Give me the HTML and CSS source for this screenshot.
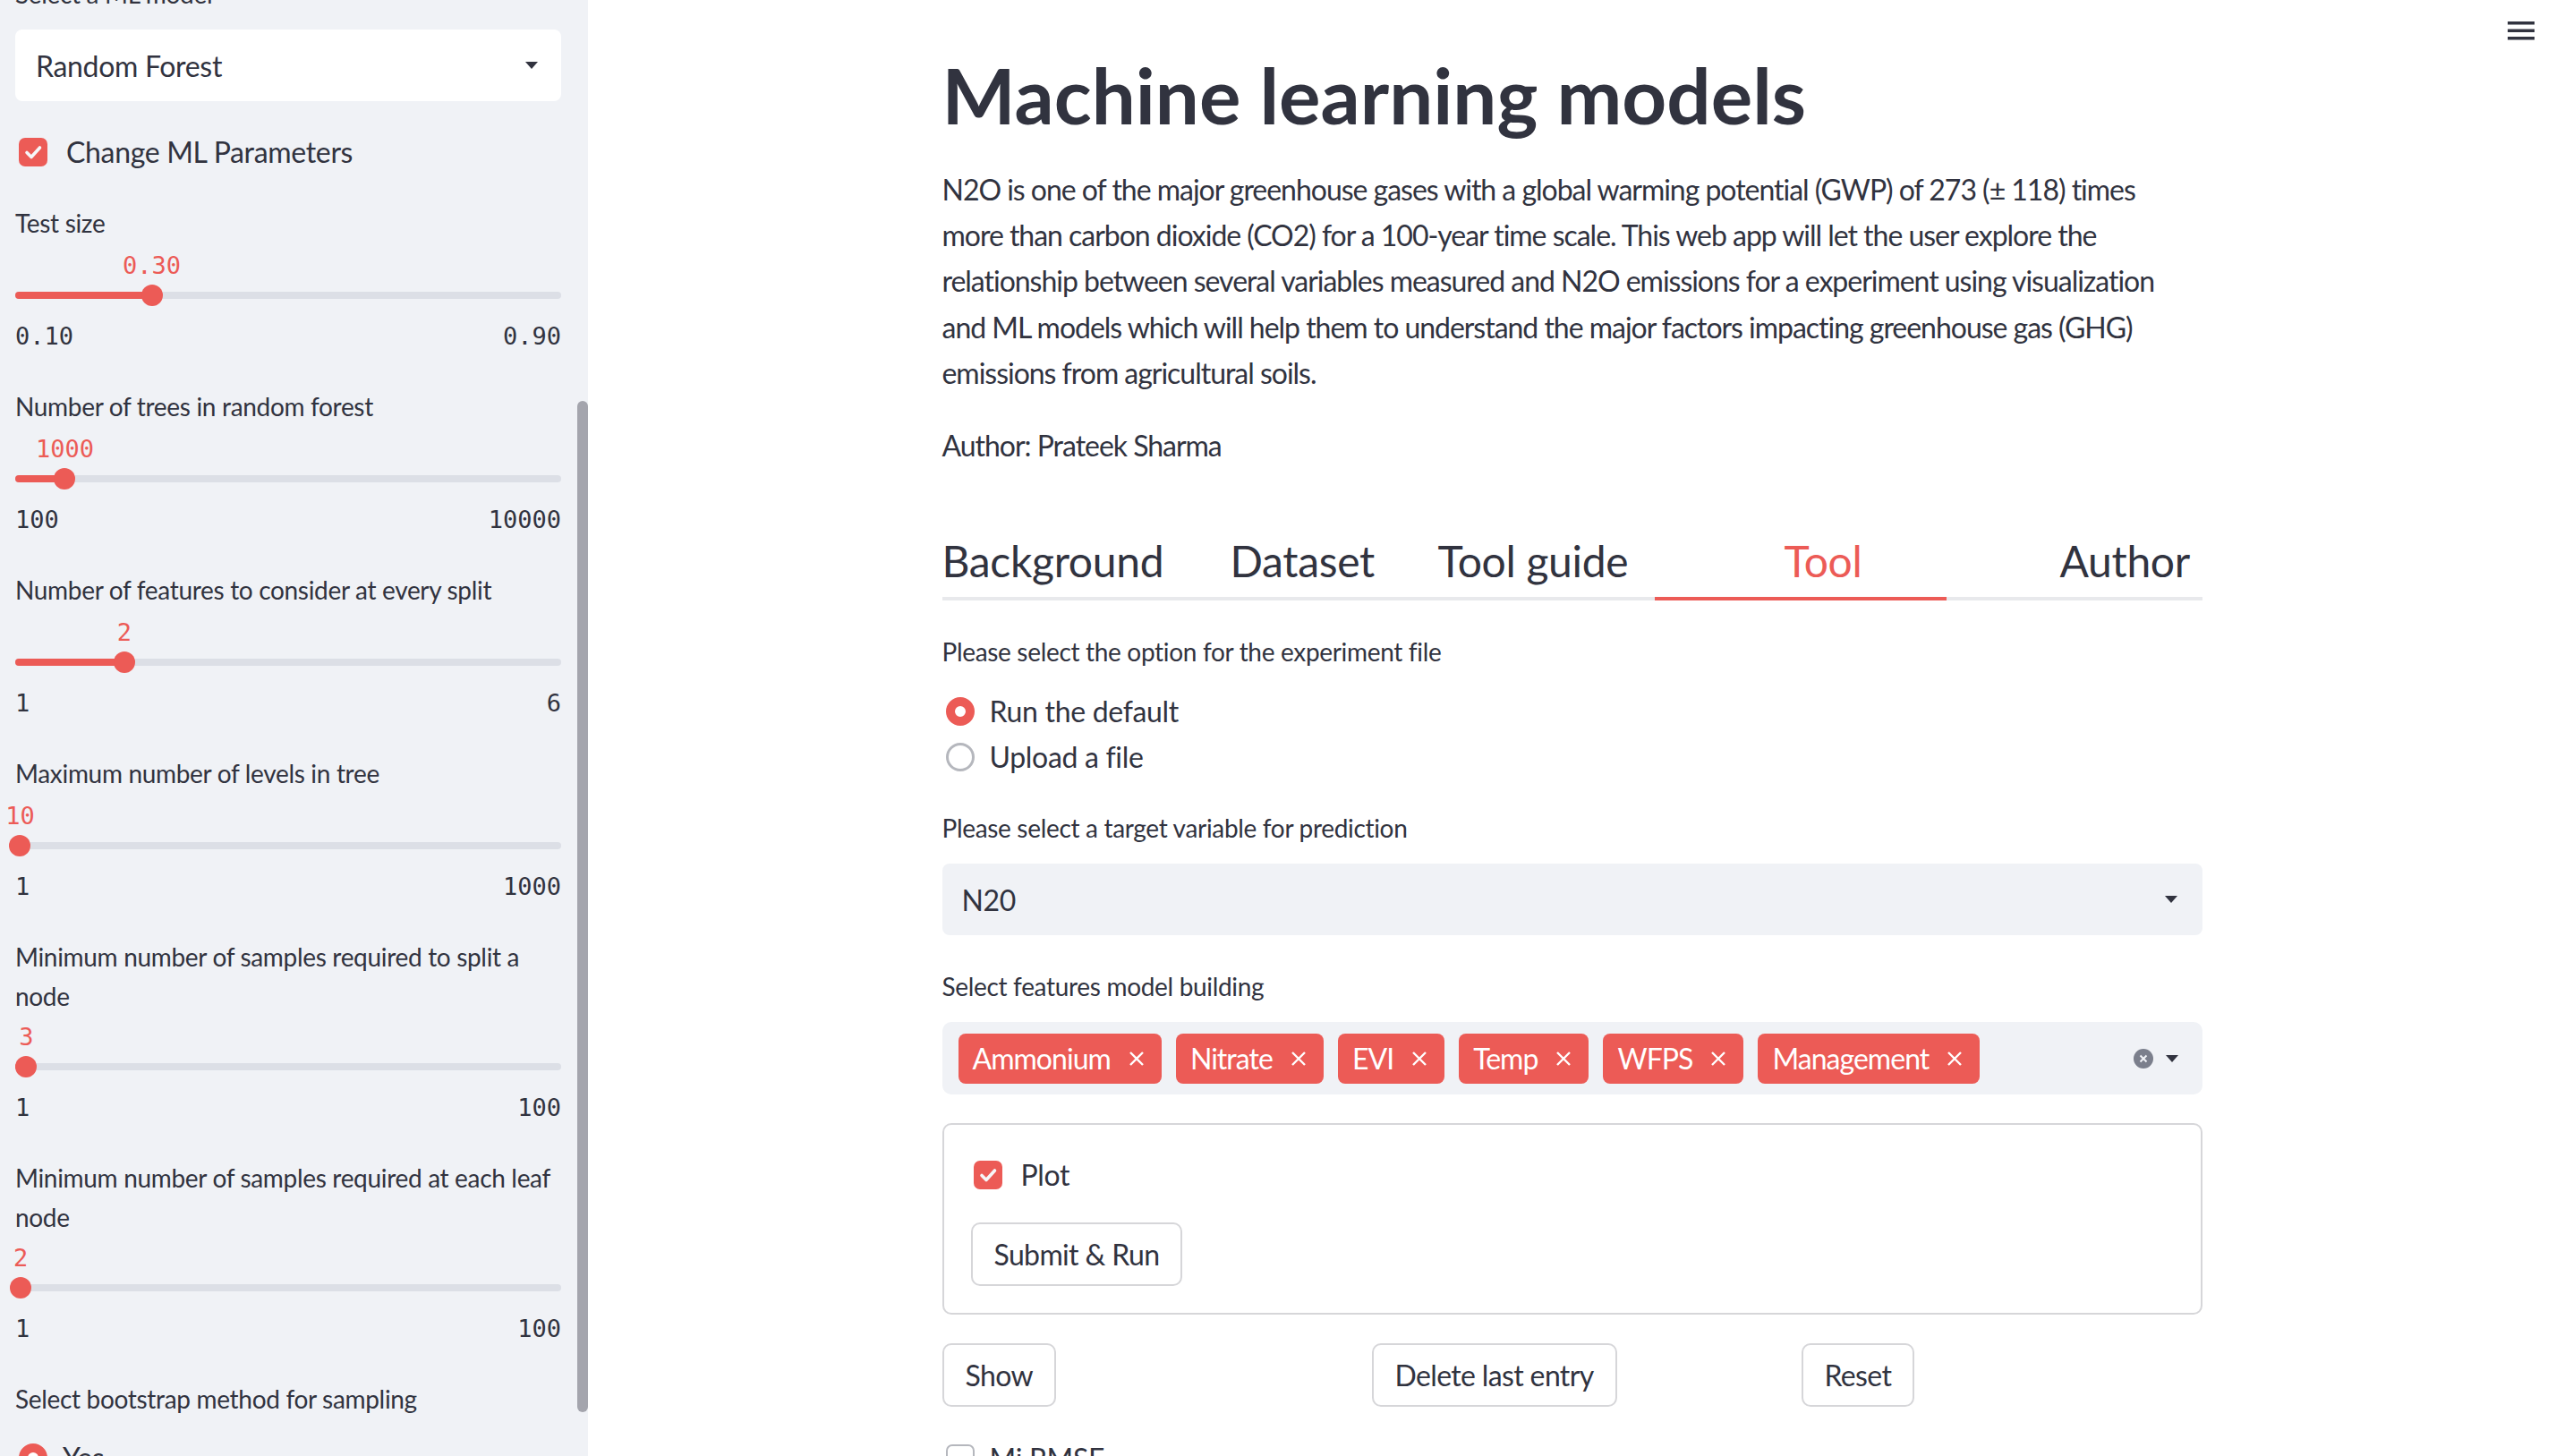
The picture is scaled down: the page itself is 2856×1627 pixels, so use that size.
FILE: index.html
```html
<!DOCTYPE html>
<html lang="en">
<head>
<meta charset="utf-8">
<title>Machine learning models</title>
<link rel="stylesheet" href="styles.css">
</head>
<body>
<div class="app">
  <aside class="sidebar">
    <div class="sb-content">
      <div class="wlabel">Select a ML model</div>
      <div class="select select-white">
        <span>Random Forest</span>
        <svg class="caret" viewBox="0 0 14 8"><polygon points="0,0 14,0 7,8"/></svg>
      </div>
      <div class="check-row sb-check">
        <span class="checkbox"><svg viewBox="0 0 32 32"><polyline points="9,16.5 14,21.5 23.5,11"/></svg></span>
        <span>Change ML Parameters</span>
      </div>

      <div class="slider-block first">
        <div class="wlabel">Test size</div>
        <div class="track">
          <div class="fill" style="width:25%"></div>
          <div class="thumb" style="left:25%"></div>
          <div class="thumb-value" style="left:25%">0.30</div>
        </div>
        <div class="minmax"><span>0.10</span><span>0.90</span></div>
      </div>

      <div class="slider-block">
        <div class="wlabel">Number of trees in random forest</div>
        <div class="track">
          <div class="fill" style="width:9.09%"></div>
          <div class="thumb" style="left:9.09%"></div>
          <div class="thumb-value" style="left:9.09%">1000</div>
        </div>
        <div class="minmax"><span>100</span><span>10000</span></div>
      </div>

      <div class="slider-block">
        <div class="wlabel">Number of features to consider at every split</div>
        <div class="track">
          <div class="fill" style="width:20%"></div>
          <div class="thumb" style="left:20%"></div>
          <div class="thumb-value" style="left:20%">2</div>
        </div>
        <div class="minmax"><span>1</span><span>6</span></div>
      </div>

      <div class="slider-block">
        <div class="wlabel">Maximum number of levels in tree</div>
        <div class="track">
          <div class="fill" style="width:0.9%"></div>
          <div class="thumb" style="left:0.9%"></div>
          <div class="thumb-value" style="left:0.9%">10</div>
        </div>
        <div class="minmax"><span>1</span><span>1000</span></div>
      </div>

      <div class="slider-block two-line">
        <div class="wlabel">Minimum number of samples required to split a node</div>
        <div class="track">
          <div class="fill" style="width:2.02%"></div>
          <div class="thumb" style="left:2.02%"></div>
          <div class="thumb-value" style="left:2.02%">3</div>
        </div>
        <div class="minmax"><span>1</span><span>100</span></div>
      </div>

      <div class="slider-block two-line">
        <div class="wlabel">Minimum number of samples required at each leaf node</div>
        <div class="track">
          <div class="fill" style="width:1.01%"></div>
          <div class="thumb" style="left:1.01%"></div>
          <div class="thumb-value" style="left:1.01%">2</div>
        </div>
        <div class="minmax"><span>1</span><span>100</span></div>
      </div>

      <div class="wlabel sb-radio-label">Select bootstrap method for sampling</div>
      <div class="radio-row sb-radio">
        <span class="radio on"></span><span>Yes</span>
      </div>
    </div>
    <div class="scroll-thumb"></div>
  </aside>

  <main class="main">
    <svg class="menu" viewBox="0 0 30 21"><rect x="0" y="0" width="30" height="3.5"/><rect x="0" y="8.5" width="30" height="3.5"/><rect x="0" y="17" width="30" height="3.5"/></svg>
    <div class="block">
      <h1 class="title">Machine learning models</h1>
      <p class="para">N2O is one of the major greenhouse gases with a global warming potential (GWP) of 273 (± 118) times more than carbon dioxide (CO2) for a 100-year time scale. This web app will let the user explore the relationship between several variables measured and N2O emissions for a experiment using visualization and ML models which will help them to understand the major factors impacting greenhouse gas (GHG) emissions from agricultural soils.</p>
      <p class="para author">Author: Prateek Sharma</p>

      <div class="tabs">
        <div class="tab">Background</div>
        <div class="tab">Dataset</div>
        <div class="tab">Tool guide</div>
        <div class="tab tab-tool active">Tool</div>
        <div class="tab tab-author">Author</div>
      </div>

      <div class="wlabel main-label">Please select the option for the experiment file</div>
      <div class="radio-group">
        <div class="radio-row"><span class="radio on"></span><span>Run the default</span></div>
        <div class="radio-row"><span class="radio"></span><span>Upload a file</span></div>
      </div>

      <div class="wlabel main-label target-label">Please select a target variable for prediction</div>
      <div class="select select-grey">
        <span>N20</span>
        <svg class="caret" viewBox="0 0 14 8"><polygon points="0,0 14,0 7,8"/></svg>
      </div>

      <div class="wlabel main-label">Select features model building</div>
      <div class="multiselect">
        <div class="tags">
          <span class="tag">Ammonium<svg class="tag-x" viewBox="0 0 18 18"><path d="M2 2L16 16M16 2L2 16"/></svg></span>
          <span class="tag">Nitrate<svg class="tag-x" viewBox="0 0 18 18"><path d="M2 2L16 16M16 2L2 16"/></svg></span>
          <span class="tag">EVI<svg class="tag-x" viewBox="0 0 18 18"><path d="M2 2L16 16M16 2L2 16"/></svg></span>
          <span class="tag">Temp<svg class="tag-x" viewBox="0 0 18 18"><path d="M2 2L16 16M16 2L2 16"/></svg></span>
          <span class="tag">WFPS<svg class="tag-x" viewBox="0 0 18 18"><path d="M2 2L16 16M16 2L2 16"/></svg></span>
          <span class="tag">Management<svg class="tag-x" viewBox="0 0 18 18"><path d="M2 2L16 16M16 2L2 16"/></svg></span>
        </div>
        <div class="ms-icons">
          <svg class="clear" viewBox="0 0 22 22"><circle cx="11" cy="11" r="11"/><path d="M7.5 7.5L14.5 14.5M14.5 7.5L7.5 14.5"/></svg>
          <svg class="caret" viewBox="0 0 14 8"><polygon points="0,0 14,0 7,8"/></svg>
        </div>
      </div>

      <div class="form-box">
        <div class="check-row form-check">
          <span class="checkbox"><svg viewBox="0 0 32 32"><polyline points="9,16.5 14,21.5 23.5,11"/></svg></span>
          <span>Plot</span>
        </div>
        <button class="btn submit">Submit &amp; Run</button>
      </div>

      <div class="btn-row">
        <button class="btn">Show</button>
        <button class="btn">Delete last entry</button>
        <button class="btn">Reset</button>
      </div>

      <div class="check-row rmse-row">
        <span class="checkbox off"></span>
        <span>Mi RMSE</span>
      </div>
    </div>
  </main>
</div>
</body>
</html>
```
FILE: styles.css
```css
* { box-sizing: border-box; margin: 0; padding: 0; }

html, body {
  width: 2856px;
  height: 1627px;
  overflow: hidden;
}

body {
  font-family: "Lato", "Noto Sans", "Liberation Sans", sans-serif;
  color: #31333f;
  background: #ffffff;
  letter-spacing: -0.02em;
}

.app {
  display: flex;
  height: 1627px;
}

/* ---------- Sidebar ---------- */
.sidebar {
  width: 657px;
  flex: none;
  background: #f0f2f6;
  position: relative;
  overflow: hidden;
}

.sb-content {
  display: flex;
  flex-direction: column;
  padding: 0 30px 0 17px;
  margin-top: -29px;
}

.wlabel {
  font-size: 28px;
  line-height: 44px;
}

.select {
  height: 80px;
  border-radius: 8px;
  display: flex;
  align-items: center;
  justify-content: space-between;
  font-size: 32px;
  margin-top: 18px;
}

.select-white {
  background: #ffffff;
  padding: 0 26px 0 23px;
}

.select-grey {
  background: #f0f2f6;
  padding: 0 28px 0 22px;
}

.caret {
  width: 14px;
  height: 8px;
  fill: #31333f;
  flex: none;
}

.check-row {
  display: flex;
  align-items: center;
  gap: 21px;
  font-size: 32px;
  line-height: 51px;
  margin-left: 4px;
}

.sb-check {
  margin-top: 31px;
}

.checkbox {
  width: 32px;
  height: 32px;
  flex: none;
  border-radius: 7px;
  background: #ec5b56;
  display: flex;
  align-items: center;
  justify-content: center;
}

.checkbox svg {
  width: 32px;
  height: 32px;
  fill: none;
  stroke: #f6f6f8;
  stroke-width: 3.6;
  stroke-linecap: round;
  stroke-linejoin: round;
}

.checkbox.off {
  background: #ffffff;
  border: 2px solid #b5b7bd;
}

.slider-block {
  margin-top: 34px;
}

.slider-block.first {
  margin-top: 32px;
}

.track {
  position: relative;
  height: 8px;
  margin-top: 55px;
  background: #dcdfe6;
  border-radius: 4px;
}

.two-line .track {
  margin-top: 53px;
}

.fill {
  height: 100%;
  background: #ec5b56;
  border-radius: 4px 0 0 4px;
}

.thumb {
  position: absolute;
  top: 50%;
  width: 24px;
  height: 24px;
  border-radius: 50%;
  background: #ec5b56;
  transform: translate(-50%, -50%);
}

.thumb-value {
  position: absolute;
  top: -45px;
  transform: translateX(-50%);
  font-family: "DejaVu Sans Mono", "Liberation Mono", monospace;
  font-size: 27px;
  line-height: 32px;
  letter-spacing: 0;
  color: #ec5b56;
  white-space: nowrap;
}

.minmax {
  display: flex;
  justify-content: space-between;
  margin-top: 20px;
  font-family: "DejaVu Sans Mono", "Liberation Mono", monospace;
  font-size: 27px;
  line-height: 44px;
  letter-spacing: 0;
}

.sb-radio-label {
  margin-top: 34px;
}

.radio-row {
  display: flex;
  align-items: center;
  gap: 17px;
  font-size: 32px;
  line-height: 51px;
  margin-left: 4px;
}

.sb-radio {
  margin-top: 18px;
}

.radio {
  width: 32px;
  height: 32px;
  flex: none;
  border-radius: 50%;
  background: #ffffff;
  border: 3px solid #b5b7bd;
}

.radio.on {
  border: 10px solid #ec5b56;
  background: #ffffff;
}

.scroll-thumb {
  position: absolute;
  left: 645px;
  top: 448px;
  width: 12px;
  height: 1130px;
  border-radius: 6px;
  background: #a4a5ad;
}

/* ---------- Main ---------- */
.main {
  flex: 1;
  position: relative;
  overflow: hidden;
}

.menu {
  position: absolute;
  top: 24px;
  right: 24px;
  width: 30px;
  height: 21px;
  fill: #31333f;
}

.block {
  width: 1408px;
  margin: 0 auto;
}

.title {
  font-size: 87px;
  font-weight: 700;
  line-height: 100px;
  margin-top: 56px;
  letter-spacing: 0;
}

.para {
  font-size: 32px;
  line-height: 51.2px;
  margin-top: 30px;
  letter-spacing: -0.032em;
}

.tabs {
  display: grid;
  grid-template-columns: 322px 232px 242px 326px 1fr;
  margin-top: 72px;
  box-shadow: inset 0 -4px 0 #e8e9ec;
}

.tab {
  font-size: 48px;
  line-height: 64px;
  padding-bottom: 12px;
  white-space: nowrap;
}

.tab-tool {
  padding-left: 145px;
}

.tab-author {
  padding-left: 127px;
}

.tab.active {
  color: #ec5b56;
  box-shadow: inset 0 -4px 0 #ec5b56;
}

.main-label {
  margin-top: 35px;
}

.target-label {
  margin-top: 32px;
}

.radio-group {
  margin-top: 19px;
}

.multiselect {
  margin-top: 18px;
  height: 81px;
  background: #f0f2f6;
  border-radius: 10px;
  display: flex;
  align-items: center;
  justify-content: space-between;
  padding: 0 27px 0 18px;
}

.tags {
  display: flex;
  gap: 16px;
}

.tag {
  height: 56px;
  display: inline-flex;
  align-items: center;
  gap: 20px;
  padding: 0 19px 0 16px;
  border-radius: 8px;
  background: #ec5b56;
  color: #ffffff;
  font-size: 32px;
  letter-spacing: -0.03em;
}

.tag-x {
  width: 18px;
  height: 18px;
  fill: none;
  stroke: #ffffff;
  stroke-width: 2.4;
}

.ms-icons {
  display: flex;
  align-items: center;
  gap: 14px;
}

.clear {
  width: 22px;
  height: 22px;
}

.clear circle {
  fill: #7b7f8c;
}

.clear path {
  stroke: #f0f2f6;
  stroke-width: 2;
  fill: none;
}

.form-box {
  margin-top: 32px;
  border: 2px solid #d6d6d9;
  border-radius: 10px;
  padding: 30px;
}

.form-check {
  margin-left: 3px;
}

.btn {
  height: 71px;
  display: inline-flex;
  align-items: center;
  padding: 0 24px;
  border: 2px solid #d6d6d9;
  border-radius: 10px;
  background: #ffffff;
  font-family: inherit;
  font-size: 32px;
  letter-spacing: -0.02em;
  color: #31333f;
}

.submit {
  margin-top: 28px;
}

.btn-row {
  display: grid;
  grid-template-columns: repeat(3, 1fr);
  gap: 32px;
  margin-top: 32px;
  justify-items: start;
}

.rmse-row {
  margin-top: 32px;
  gap: 17px;
}
```
